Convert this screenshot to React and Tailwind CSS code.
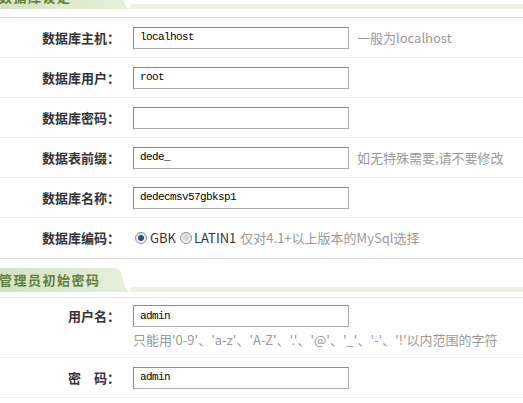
import React from 'react';

const cjk = { fontFamily: '"Noto Sans CJK SC", "Noto Sans", sans-serif' };
const mono = { fontFamily: '"Liberation Mono", "DejaVu Sans Mono", monospace' };

const SectionHeader = ({ title, className }) => (
  <div className={`flex items-end h-[33px] ${className}`}>
    <div
      className="h-[24px] w-[114px] flex items-center bg-gradient-to-r from-[#d3e3be] to-[#e4eed8] text-[13px] font-bold tracking-[1.5px] text-[#5f7f3c] whitespace-nowrap"
      style={cjk}
    >
      <span className="-ml-[1px]">{title}</span>
    </div>
    <svg width="17" height="24" viewBox="0 0 17 24" className="block">
      <path d="M0 0 C6 0 7 4 9 12 C11 20 13 24 17 24 L0 24 Z" fill="#e4eed8" />
    </svg>
    <div className="flex-1 h-[5px] bg-[#f0f0e7]" />
  </div>
);

const Label = ({ children }) => (
  <div
    className="w-[120px] shrink-0 text-right text-[13px] font-bold text-[#333] whitespace-nowrap"
    style={cjk}
  >
    {children}
  </div>
);

const TextBox = ({ value }) => (
  <div
    className="ml-[13px] w-[216px] h-[22px] shrink-0 border border-[#a9a9a9] border-t-[#8e8e8e] border-l-[#8e8e8e] bg-white flex items-center pl-[6px] text-[11px] tracking-[-0.6px] text-black"
    style={mono}
  >
    {value}
  </div>
);

const Hint = ({ children }) => (
  <span className="ml-[8px] text-[13px] text-[#999] whitespace-nowrap" style={cjk}>
    {children}
  </span>
);

const Row = ({ label, value, hint }) => (
  <div className="flex items-center h-[40px] border-b border-[#ececec]">
    <Label>{label}</Label>
    <TextBox value={value} />
    {hint && <Hint>{hint}</Hint>}
  </div>
);

const Radio = ({ checked }) => (
  <span className="w-[12px] h-[12px] rounded-full border border-[#8d8d8d] bg-gradient-to-b from-[#e2e2e2] to-[#f8f8f8] flex items-center justify-center shrink-0">
    {checked ? (
      <span className="w-[6px] h-[6px] rounded-full bg-[#1f5aa0] border border-[#123d70]" />
    ) : (
      <span className="w-[6px] h-[6px] rounded-full bg-[#d4d4d4]" />
    )}
  </span>
);

export default function App() {
  return (
    <div className="w-[523px] h-[403px] overflow-hidden bg-white" style={cjk}>
      <SectionHeader title="数据库设定" className="-mt-[24px] mb-[8px]" />
      <div className="border-t border-[#d6d6ce]">
        <Row label="数据库主机：" value="localhost" hint="一般为localhost" />
        <Row label="数据库用户：" value="root" />
        <Row label="数据库密码：" value="" />
        <Row label="数据表前缀：" value="dede_" hint="如无特殊需要,请不要修改" />
        <Row label="数据库名称：" value="dedecmsv57gbksp1" />
        <div className="flex items-center h-[41px] border-b border-[#d6d6ce]">
          <Label>数据库编码：</Label>
          <div className="ml-[15px] flex items-center text-[13px] text-[#333] whitespace-nowrap">
            <Radio checked />
            <span className="ml-[3px]">GBK</span>
            <span className="ml-[4px]"><Radio /></span>
            <span className="ml-[2px]">LATIN1</span>
            <span className="ml-[4px] text-[#999]">仅对4.1+以上版本的MySql选择</span>
          </div>
        </div>
      </div>
      <SectionHeader title="管理员初始密码" className="mb-[5px]" />
      <div className="border-t border-[#e4e4dc]">
        <div className="flex items-start h-[60px] border-b border-[#ececec] pt-[7px]">
          <Label>
            <div className="h-[22px] flex items-center justify-end">用户名：</div>
          </Label>
          <div className="flex flex-col">
            <TextBox value="admin" />
            <span className="ml-[13px] mt-[3px] text-[13px] text-[#999] whitespace-nowrap">
              只能用'0-9'、'a-z'、'A-Z'、'.'、'@'、'_'、'-'、'!'以内范围的字符
            </span>
          </div>
        </div>
        <div className="flex items-center h-[40px] border-b border-[#ececec]">
          <Label>密　码：</Label>
          <TextBox value="admin" />
        </div>
      </div>
    </div>
  );
}
